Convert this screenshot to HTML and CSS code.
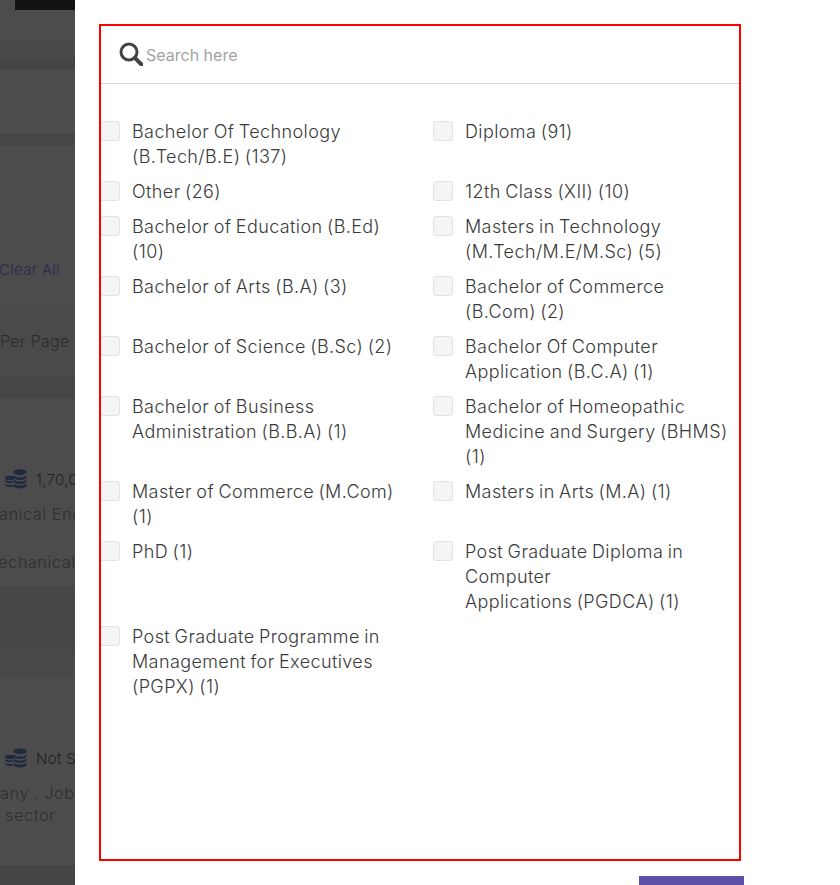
FILE: index.html
```html
<!DOCTYPE html>
<html lang="en">
<head>
<meta charset="utf-8">
<title>Education filter</title>
<link rel="stylesheet" href="styles.css">
</head>
<body>
<div class="page">
  <aside class="backdrop">
    <div class="band b-top"><div class="topbar"></div></div>
    <div class="band b-a"></div>
    <div class="band b-b"></div>
    <div class="band b-c"></div>
    <div class="band b-b2"></div>
    <div class="band b-d"><span class="clear">Clear All</span></div>
    <div class="band b-e"><span class="perpage">Per Page</span></div>
    <div class="band b-f"></div>
    <div class="band b-g">
      <div class="salary">
        <svg class="coins" viewBox="0 0 22 20"><g fill="#1f2a40"><ellipse cx="15" cy="3.2" rx="6.5" ry="3"/><path d="M8.500 6.200c1 1.600 3.600 2.400 6.500 2.400s5.500-.8 6.500-2.400v1.800c0 1.600-2.900 3-6.500 3s-6.500-1.400-6.500-3zM8.500 10.200c1 1.600 3.600 2.400 6.500 2.400s5.500-.8 6.500-2.400v1.800c0 1.600-2.900 3-6.500 3s-6.500-1.400-6.500-3zM8.500 14.200c1 1.600 3.600 2.400 6.500 2.400s5.500-.8 6.500-2.400v2.300c0 1.600-2.900 3-6.500 3s-6.500-1.400-6.500-3z"/><ellipse cx="5" cy="9" rx="5" ry="2.200"/><path d="M0 10.800c.8 1.100 2.800 1.700 5 1.700 1 0 2-.1 2.700-.4v1.700c-.7.3-1.700.5-2.700.5-2.800 0-5-1-5-2.200zM0 14.400c.8 1.100 2.800 1.700 5 1.700 1 0 2-.1 2.700-.4v1.700c-.7.3-1.700.5-2.700.5-2.800 0-5-1-5-2.200z"/></g></svg>
        <span>1,70,000</span>
      </div>
      <p class="job-line l-1">anical Engineer</p>
      <p class="job-line l-2">echanical</p>
    </div>
    <div class="band b-h"></div>
    <div class="band b-i"></div>
    <div class="band b-j">
      <div class="salary">
        <svg class="coins" viewBox="0 0 22 20"><g fill="#1f2a40"><ellipse cx="15" cy="3.2" rx="6.5" ry="3"/><path d="M8.500 6.200c1 1.600 3.600 2.400 6.500 2.400s5.500-.8 6.500-2.400v1.800c0 1.600-2.900 3-6.500 3s-6.500-1.400-6.500-3zM8.500 10.200c1 1.600 3.600 2.400 6.500 2.400s5.500-.8 6.500-2.400v1.800c0 1.600-2.900 3-6.500 3s-6.500-1.400-6.500-3zM8.500 14.200c1 1.600 3.600 2.400 6.500 2.400s5.500-.8 6.500-2.400v2.300c0 1.600-2.900 3-6.500 3s-6.500-1.400-6.500-3z"/><ellipse cx="5" cy="9" rx="5" ry="2.200"/><path d="M0 10.800c.8 1.100 2.800 1.700 5 1.700 1 0 2-.1 2.700-.4v1.700c-.7.3-1.700.5-2.700.5-2.800 0-5-1-5-2.200zM0 14.400c.8 1.100 2.800 1.700 5 1.700 1 0 2-.1 2.700-.4v1.700c-.7.3-1.700.5-2.700.5-2.800 0-5-1-5-2.200z"/></g></svg>
        <span>Not Specified</span>
      </div>
      <p class="job-line l-3">any . Job type</p>
      <p class="job-line l-4">sector</p>
    </div>
    <div class="band b-k"></div>
  </aside>

  <main class="modal">
    <section class="filter-box">
      <div class="search">
        <svg class="search-icon" viewBox="0 0 24 24"><circle cx="10" cy="10" r="8" fill="none" stroke="#444" stroke-width="3"/><path d="M15.800 15.800L22.500 22.500" stroke="#444" stroke-width="4" stroke-linecap="round"/></svg>
        <span class="placeholder">Search here</span>
      </div>
      <ul class="options">
        <li class="option"><span class="check"></span><span class="label">Bachelor Of Technology<br>(B.Tech/B.E) (137)</span></li>
        <li class="option"><span class="check"></span><span class="label">Diploma (91)</span></li>
        <li class="option"><span class="check"></span><span class="label">Other (26)</span></li>
        <li class="option"><span class="check"></span><span class="label">12th Class (XII) (10)</span></li>
        <li class="option"><span class="check"></span><span class="label">Bachelor of Education (B.Ed)<br>(10)</span></li>
        <li class="option"><span class="check"></span><span class="label">Masters in Technology<br>(M.Tech/M.E/M.Sc) (5)</span></li>
        <li class="option"><span class="check"></span><span class="label">Bachelor of Arts (B.A) (3)</span></li>
        <li class="option"><span class="check"></span><span class="label">Bachelor of Commerce<br>(B.Com) (2)</span></li>
        <li class="option"><span class="check"></span><span class="label">Bachelor of Science (B.Sc) (2)</span></li>
        <li class="option"><span class="check"></span><span class="label">Bachelor Of Computer<br>Application (B.C.A) (1)</span></li>
        <li class="option"><span class="check"></span><span class="label">Bachelor of Business<br>Administration (B.B.A) (1)</span></li>
        <li class="option"><span class="check"></span><span class="label">Bachelor of Homeopathic<br>Medicine and Surgery (BHMS)<br>(1)</span></li>
        <li class="option"><span class="check"></span><span class="label">Master of Commerce (M.Com)<br>(1)</span></li>
        <li class="option"><span class="check"></span><span class="label">Masters in Arts (M.A) (1)</span></li>
        <li class="option"><span class="check"></span><span class="label">PhD (1)</span></li>
        <li class="option"><span class="check"></span><span class="label">Post Graduate Diploma in<br>Computer<br>Applications (PGDCA) (1)</span></li>
        <li class="option"><span class="check"></span><span class="label">Post Graduate Programme in<br>Management for Executives<br>(PGPX) (1)</span></li>
      </ul>
    </section>
    <div class="apply"></div>
  </main>
</div>
</body>
</html>
```

FILE: styles.css
```css
* { box-sizing: border-box; }
html, body { margin: 0; padding: 0; background: #fff; }
body { height: 885px; overflow: hidden; font-family: Inter, "Open Sans", sans-serif; }

.page { display: flex; height: 885px; overflow: hidden; }

.backdrop { width: 75px; flex: none; display: flex; flex-direction: column; overflow: hidden; background: #4c4c4c; font-size: 15px; }
.band { flex: none; overflow: hidden; white-space: nowrap; }
.b-top { height: 40px; background: #4c4c4c; }
.topbar { height: 10px; margin-left: 15px; background: #111; }
.b-a { height: 18px; background: #494949; }
.b-b { height: 12px; background: #454545; }
.b-c { height: 63px; background: #4d4d4d; }
.b-b2 { height: 13px; background: #464646; }
.b-d { height: 164px; background: #4c4c4c; padding-top: 114px; line-height: 20px; }
.clear { display: block; margin-left: -1px; color: #2b2950; font-size: 15px; font-weight: 300; letter-spacing: .3px; }
.b-e { height: 65px; background: #4a4a4a; padding-top: 21px; line-height: 20px; }
.perpage { color: #2c2c2c; font-size: 16.500px; font-weight: 300; }
.b-f { height: 23px; background: #464646; }
.b-g { height: 188px; background: #4c4c4c; padding-top: 70px; }
.b-h { height: 66px; background: #474747; }
.b-i { height: 26px; background: #494949; }
.b-j { height: 187px; background: #4d4d4d; padding-top: 69px; }
.b-k { height: 20px; background: #454545; }

.salary { display: flex; align-items: center; height: 22px; padding-left: 5px; gap: 9px; color: #1f1f1f; font-size: 15px; font-weight: 300; letter-spacing: .3px; }
.coins { width: 22px; height: 20px; flex: none; }
.job-line { margin: 0; color: #2f2f2f; font-size: 16.500px; font-weight: 300; letter-spacing: .45px; line-height: 22px; }
.l-1 { margin-top: 13px; margin-left: -1px; }
.l-2 { margin-top: 26px; margin-left: -2px; }
.l-3 { margin-top: 13px; }
.l-4 { margin-left: 5px; }

.modal { flex: 1; min-width: 0; padding: 24px 0 0 24px; background: #fff; }
.filter-box { width: 642px; height: 837px; border: 2px solid #f00; overflow: hidden; }

.search { display: flex; align-items: center; height: 58px; border-bottom: 1px solid #ddd; padding: 0 0 0 18px; gap: 3px; }
.search-icon { width: 24px; height: 24px; flex: none; margin-top: -1px; }
.placeholder { font-size: 16px; color: #a3a3a3; padding-top: 1px; }

.options { list-style: none; margin: 0 0 0 -1px; padding: 35px 0 0; display: grid; grid-template-columns: 333px 1fr; row-gap: 10px; }
.option { display: flex; gap: 12px; }
.check { width: 20px; height: 20px; flex: none; margin-top: 2px; background: #f5f5f5; border: 1px solid #e2e2e2; border-radius: 3px; }
.label { font-size: 18px; font-weight: 300; letter-spacing: .4px; word-spacing: -1px; line-height: 25px; color: #3a3a3a; white-space: nowrap; }

.apply { width: 105px; height: 40px; margin: 15px 0 0 540px; background: #5f4ea5; }
```
